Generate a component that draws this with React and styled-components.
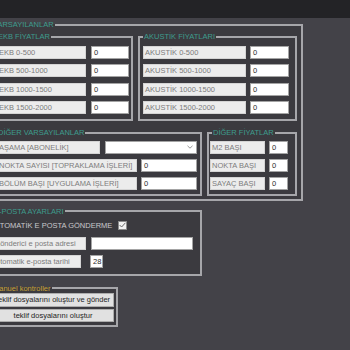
import React from 'react';
import styled, { createGlobalStyle } from 'styled-components';

const Global = createGlobalStyle`
  html, body { margin: 0; padding: 0; background: #434248; overflow: hidden; }
  body { font-family: "Liberation Sans", Arial, sans-serif; font-size: 7.5px; }
  * { box-sizing: border-box; }
`;

const TopBar = styled.div`
  height: 18px;
  background: #232326;
`;

const Page = styled.div`
  margin-left: -15px;
  padding-top: 2px;
  width: 318px;
  display: flex;
  flex-direction: column;
  align-items: flex-start;
`;

const Group = styled.fieldset`
  margin: ${p => p.$mt || 0}px 0 0 0;
  width: ${p => p.$w}px;
  min-width: 0;
  padding: ${p => p.$pad};
  border: 2px solid #a6a6aa;
  background: #3b3a3f;
  flex: none;
`;

const Title = styled.legend`
  padding: 0 1px;
  margin-left: ${p => p.$ml || 0}px;
  line-height: 9px;
  font-size: 7.5px;
  color: ${p => p.$c || '#3e9c8d'};
  white-space: nowrap;
`;

const Stack = styled.div`
  display: flex;
  flex-direction: column;
  gap: ${p => p.$gap}px;
`;

const Pair = styled.div`
  display: flex;
  gap: 5px;
  align-items: flex-start;
`;

const Row = styled.div`
  display: grid;
  grid-template-columns: ${p => p.$cols};
  column-gap: ${p => p.$cg}px;
  height: 13px;
`;

const Label = styled.div`
  height: 13px;
  background: #ececec;
  border: 1px solid #d4d4d4;
  color: #7c7c7c;
  line-height: 11px;
  padding-left: ${p => p.$pl ?? 1}px;
  white-space: nowrap;
  overflow: hidden;
`;

const Value = styled.div`
  height: 13px;
  background: #ffffff;
  border: 1px solid #a4a4a4;
  color: #2a2a2a;
  line-height: 11px;
  padding-left: 2px;
  white-space: nowrap;
  overflow: hidden;
`;

const Combo = styled(Value)`
  display: flex;
  justify-content: flex-end;
  align-items: center;
  padding-right: 3px;
`;

const TextRow = styled.div`
  height: 13px;
  display: flex;
  align-items: center;
  gap: 6px;
  padding-left: 1px;
  color: #c9c9cc;
  white-space: nowrap;
`;

const Check = styled.div`
  width: 9px;
  height: 9px;
  background: #f2f2f2;
  border: 1px solid #8c8c8c;
  display: flex;
  align-items: center;
  justify-content: center;
`;

const Button = styled.div`
  height: ${p => p.$h}px;
  background: #e1e1e1;
  border: 1px solid #adadad;
  color: #1e1e1e;
  text-align: center;
  line-height: ${p => p.$h - 2}px;
  white-space: nowrap;
`;

const pricesRows = (prefix) => ['0-500', '500-1000', '1000-1500', '1500-2000'].map(r => `${prefix} ${r}`);

export default function App() {
  return (
    <>
      <Global />
      <TopBar />
      <Page>
        <Group $w={318} $pad="3px 4px 3px 5px">
          <Title>VARSAYILANLAR</Title>
          <Stack $gap={7.5}>
            <Pair>
              <Group $w={141} $pad="5px 2px 5px 3px">
                <Title>EKB FİYATLAR</Title>
                <Stack $gap={5.33}>
                  {pricesRows('EKB').map(t => (
                    <Row key={t} $cols="89px 38px" $cg={5}>
                      <Label>{t}</Label>
                      <Value>0</Value>
                    </Row>
                  ))}
                </Stack>
              </Group>
              <Group $w={159} $pad="5px 6px 5px 3px">
                <Title>AKUSTİK FİYATLARI</Title>
                <Stack $gap={5.33}>
                  {pricesRows('AKUSTİK').map(t => (
                    <Row key={t} $cols="103px 39px" $cg={4}>
                      <Label>{t}</Label>
                      <Value>0</Value>
                    </Row>
                  ))}
                </Stack>
              </Group>
            </Pair>
            <Pair>
              <Group $w={210} $pad="3.5px 3px 4px 3px">
                <Title>DİĞER VARSAYILANLAR</Title>
                <Stack $gap={5}>
                  <Row $cols="103px 92px" $cg={5}>
                    <Label>AŞAMA [ABONELİK]</Label>
                    <Combo>
                      <svg width="6" height="4" viewBox="0 0 6 4">
                        <path d="M0.5 0.8 L3 3.2 L5.5 0.8" fill="none" stroke="#8a8a8a" strokeWidth="0.9" />
                      </svg>
                    </Combo>
                  </Row>
                  <Row $cols="140px 56px" $cg={4}>
                    <Label>NOKTA SAYISI [TOPRAKLAMA İŞLERİ]</Label>
                    <Value>0</Value>
                  </Row>
                  <Row $cols="140px 56px" $cg={4}>
                    <Label>BÖLÜM BAŞI [UYGULAMA İŞLERİ]</Label>
                    <Value>0</Value>
                  </Row>
                </Stack>
              </Group>
              <Group $w={90} $pad="3.5px 7px 4px 1px">
                <Title $ml={2}>DİĞER FİYATLAR</Title>
                <Stack $gap={5}>
                  {['M2 BAŞI', 'NOKTA BAŞI', 'SAYAÇ BAŞI'].map(t => (
                    <Row key={t} $cols="55px 19px" $cg={4}>
                      <Label>{t}</Label>
                      <Value>0</Value>
                    </Row>
                  ))}
                </Stack>
              </Group>
            </Pair>
          </Stack>
        </Group>

        <Group $w={217} $mt={6} $pad="3px 5px 6px 6px">
          <Title>E-POSTA AYARLARI</Title>
          <Stack $gap={5}>
            <TextRow>
              <span>OTOMATİK E POSTA GÖNDERME</span>
              <Check>
                <svg width="7" height="6" viewBox="0 0 7 6">
                  <path d="M0.6 3 L2.6 5 L6.4 0.8" fill="none" stroke="#6a6a6a" strokeWidth="1" />
                </svg>
              </Check>
            </TextRow>
            <Row $cols="93px 102px" $cg={5}>
              <Label $pl={2}>gönderici e posta adresi</Label>
              <Value />
            </Row>
            <Row $cols="88px 13px" $cg={9}>
              <Label $pl={2}>otomatik e-posta tarihi</Label>
              <Value>28</Value>
            </Row>
          </Stack>
        </Group>

        <Group $w={133} $mt={8} $pad="0 2px 3px 5px">
          <Title $c="#c8a23a">Manuel kontroller</Title>
          <Stack $gap={2}>
            <Button $h={14}>teklif dosyalarını oluştur ve gönder</Button>
            <Button $h={13}>teklif dosyalarını oluştur</Button>
          </Stack>
        </Group>
      </Page>
    </>
  );
}
